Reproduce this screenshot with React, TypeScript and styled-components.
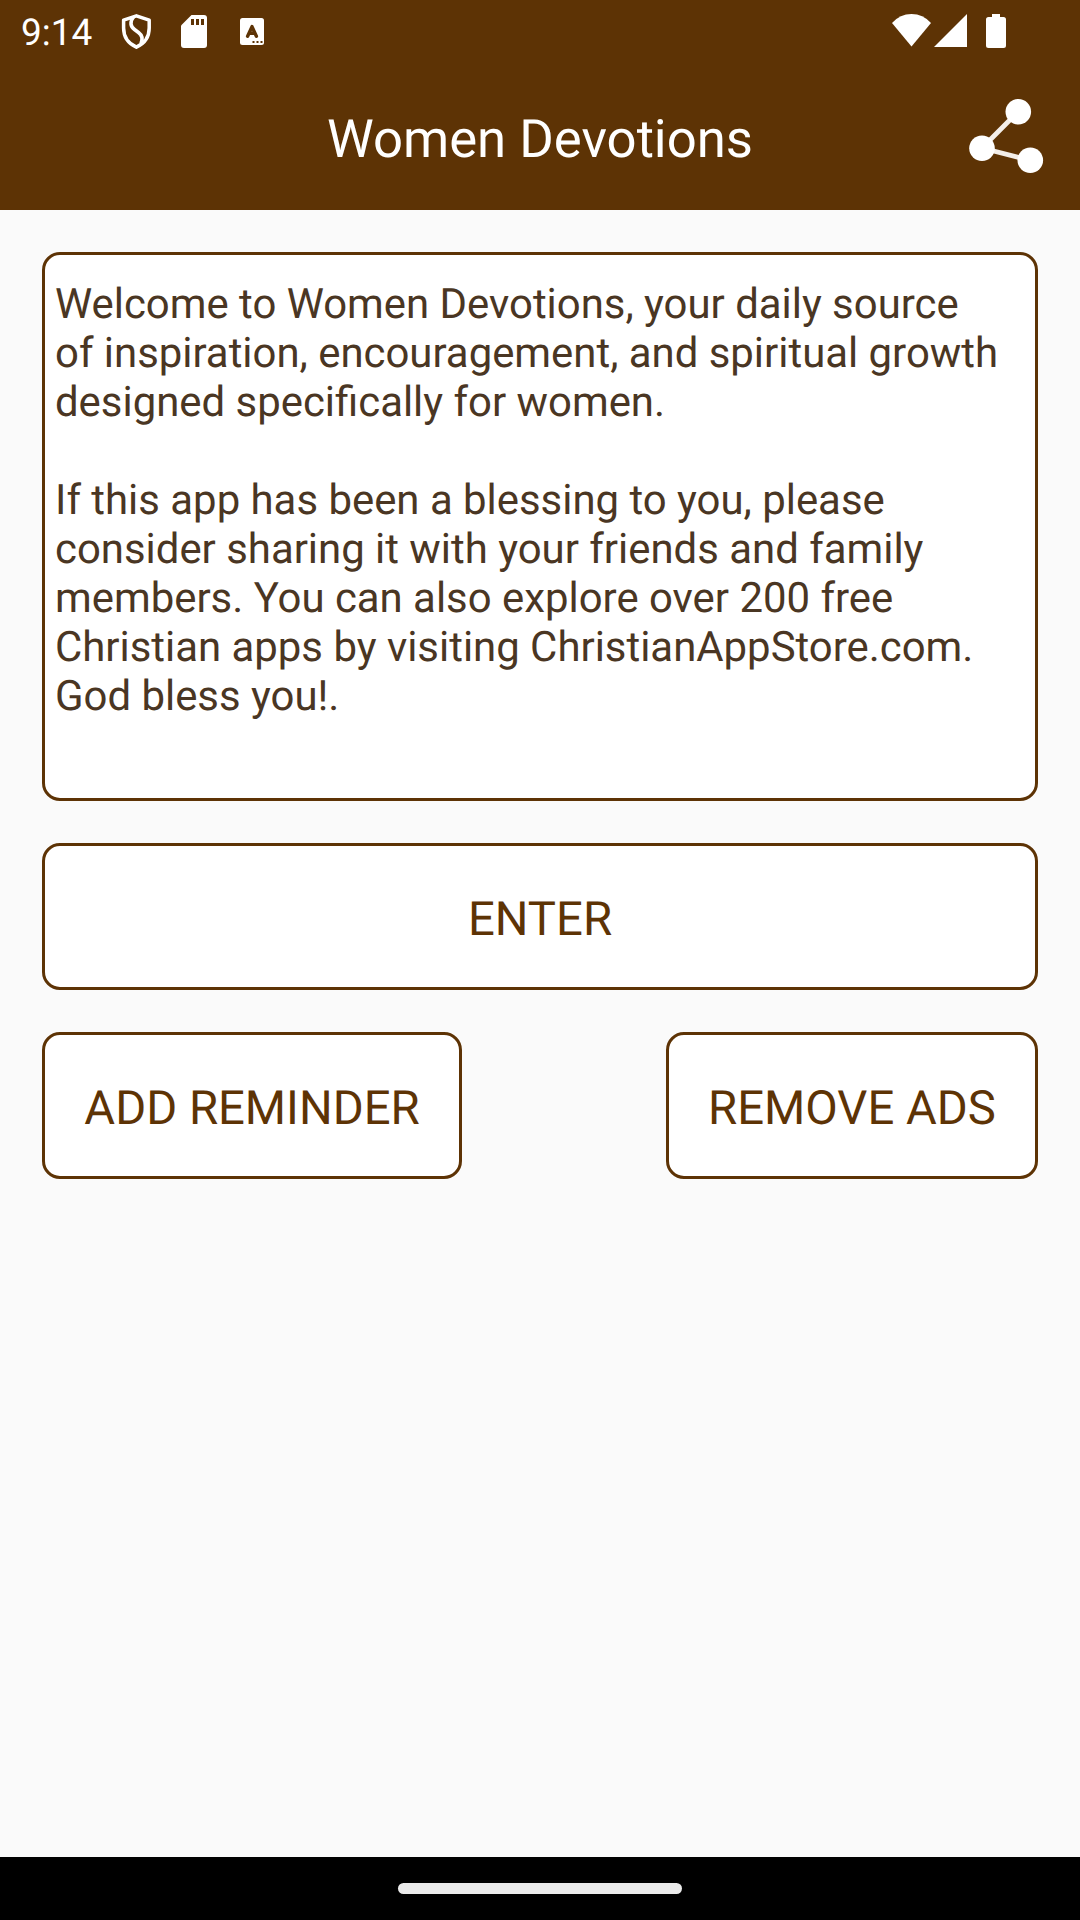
import React from "react";
import styled, { createGlobalStyle } from "styled-components";

const brown = "#5d3305";

const GlobalStyle = createGlobalStyle`
  body { margin: 0; }
  *, *::before, *::after { box-sizing: border-box; }
`;

const Screen = styled.div`
  width: 1080px;
  height: 1920px;
  display: flex;
  flex-direction: column;
  background: #fafafa;
  font-family: Roboto, "Liberation Sans", sans-serif;
  text-rendering: geometricPrecision;
  overflow: hidden;
`;

const StatusBar = styled.header`
  height: 63px;
  flex: none;
  display: flex;
  justify-content: space-between;
  background: ${brown};
  color: #fff;
`;

const StatusGroup = styled.div`
  display: flex;
`;

const Clock = styled.span`
  width: 93px;
  padding: 12px 0 0 21px;
  font-size: 37px;
  line-height: 43px;
  white-space: nowrap;
`;

const Toolbar = styled.div`
  height: 147px;
  flex: none;
  display: grid;
  grid-template-columns: 147px 1fr 147px;
  background: ${brown};
`;

const Title = styled.h1`
  grid-column: 2;
  margin: 0;
  padding-top: 45px;
  text-align: center;
  font-size: 52.7px;
  font-weight: 400;
  line-height: 62px;
  color: #fff;
  white-space: nowrap;
`;

const ShareButton = styled.button`
  padding: 0;
  border: 0;
  background: none;
  height: 147px;
  svg { display: block; }
`;

const Content = styled.main`
  flex: 1;
  display: flex;
  flex-direction: column;
  gap: 42px;
  padding: 42px;
`;

const Card = styled.section`
  height: 549px;
  padding: 25px 10px;
  border: 3px solid ${brown};
  border-radius: 18px;
  background: #fff;
  color: #4a3623;
  font-size: 41.9px;
  line-height: 49px;
`;

const Paragraph = styled.p`
  margin: 0 0 49px;
`;

const Line = styled.span`
  display: block;
  white-space: nowrap;
`;

const OutlineButton = styled.button<{ $width?: number }>`
  width: ${(p) => (p.$width ? `${p.$width}px` : "100%")};
  height: 147px;
  padding: 4px 0 0;
  border: 3px solid ${brown};
  border-radius: 18px;
  background: #fff;
  color: ${brown};
  font-family: inherit;
  font-size: 47.25px;
  line-height: 56px;
  text-rendering: inherit;
  white-space: nowrap;
`;

const ButtonRow = styled.div`
  display: flex;
  justify-content: space-between;
`;

const NavBar = styled.footer`
  height: 63px;
  flex: none;
  display: flex;
  justify-content: center;
  padding-top: 26px;
  background: #000;
`;

const HomeHandle = styled.div`
  width: 284px;
  height: 11px;
  border-radius: 6px;
  background: #ebebeb;
`;

const intro = [
  "Welcome to Women Devotions, your daily source",
  "of inspiration, encouragement, and spiritual growth",
  "designed specifically for women.",
];

const invitation = [
  "If this app has been a blessing to you, please",
  "consider sharing it with your friends and family",
  "members. You can also explore over 200 free",
  "Christian apps by visiting ChristianAppStore.com.",
  "God bless you!.",
];

const NotificationIcons = () => (
  <svg width="187" height="63" viewBox="93 0 187 63" fill="#fff">
    <path
      d="M136.4 15.8 L149.2 20.2 V28 C149.2 36.5 144.5 43.5 136.4 47.2 C128.3 43.5 123.6 36.5 123.6 28 V20.2 Z"
      fill="none"
      stroke="#fff"
      strokeWidth="3.5"
      strokeLinejoin="round"
    />
    <path
      d="M133.5 17 C129.5 22 130.5 26.5 134.5 29.5 L138.5 32.5 C142.5 35.5 143 39 141 43.5"
      fill="none"
      stroke="#fff"
      strokeWidth="3.6"
    />
    <path d="M191.5 15 H204 Q207 15 207 18 V45 Q207 48 204 48 H184 Q181 48 181 45 V25.5 Z" />
    <path d="M191 19h3v6h-3z M196 19h3v6h-3z M201 19h3v6h-3z" fill={brown} />
    <rect x="240" y="18" width="24" height="27" rx="2.5" />
    <path
      d="M247.6 36.2 L252 26.6 L256.4 36.2 M249.5 33.2 H254.5"
      fill="none"
      stroke={brown}
      strokeWidth="3.4"
      strokeLinecap="round"
      strokeLinejoin="round"
    />
    <path d="M252.5 41h2v2h-2z M256.5 41h2v2h-2z M260.5 41h2v2h-2z" fill={brown} />
  </svg>
);

const SystemIcons = () => (
  <svg width="200" height="63" viewBox="880 0 200 63" fill="#fff">
    <path d="M892 23 Q900 14 911.5 14 Q923 14 931 23 L911.5 46.5 Z" />
    <path d="M967 14 V47 H934 Z" />
    <path d="M992 14 H1000 V17 H1003.5 Q1006 17 1006 19.5 V45.5 Q1006 48 1003.5 48 H988.5 Q986 48 986 45.5 V19.5 Q986 17 988.5 17 H992 Z" />
  </svg>
);

const ShareIcon = () => (
  <svg width="147" height="147" viewBox="933 63 147 147">
    <path d="M1018.3 111.5 L982 148 L1030.5 160.5" fill="none" stroke="#f3eee9" strokeWidth="4.8" />
    <circle cx="1018.3" cy="111.7" r="12.8" fill="#fff" />
    <circle cx="982" cy="148.2" r="12.8" fill="#fff" />
    <circle cx="1030.3" cy="160.3" r="12.8" fill="#fff" />
  </svg>
);

export default function App() {
  return (
    <Screen>
      <GlobalStyle />
      <StatusBar>
        <StatusGroup>
          <Clock>9:14</Clock>
          <NotificationIcons />
        </StatusGroup>
        <StatusGroup>
          <SystemIcons />
        </StatusGroup>
      </StatusBar>
      <Toolbar>
        <Title>Women Devotions</Title>
        <ShareButton aria-label="Share">
          <ShareIcon />
        </ShareButton>
      </Toolbar>
      <Content>
        <Card>
          <Paragraph>
            {intro.map((line) => (
              <Line key={line}>{line}</Line>
            ))}
          </Paragraph>
          <Paragraph>
            {invitation.map((line) => (
              <Line key={line}>{line}</Line>
            ))}
          </Paragraph>
        </Card>
        <OutlineButton>ENTER</OutlineButton>
        <ButtonRow>
          <OutlineButton $width={420}>ADD REMINDER</OutlineButton>
          <OutlineButton $width={372}>REMOVE ADS</OutlineButton>
        </ButtonRow>
      </Content>
      <NavBar>
        <HomeHandle />
      </NavBar>
    </Screen>
  );
}
